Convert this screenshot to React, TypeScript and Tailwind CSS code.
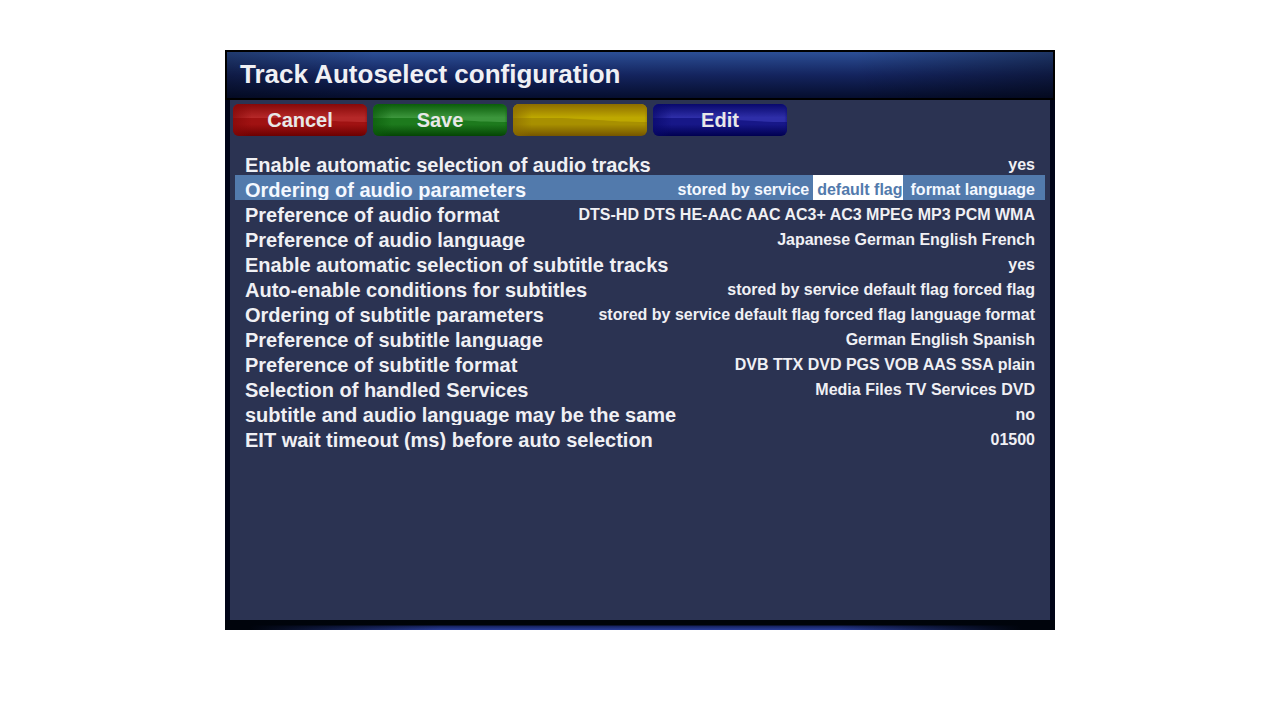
import { useId, useState } from "react";

type Setting = { label: string; values: string[] };

const settings: Setting[] = [
  { label: "Enable automatic selection of audio tracks", values: ["yes"] },
  { label: "Ordering of audio parameters", values: ["stored by service", "default flag", "format", "language"] },
  {
    label: "Preference of audio format",
    values: ["DTS-HD", "DTS", "HE-AAC", "AAC", "AC3+", "AC3", "MPEG", "MP3", "PCM", "WMA"],
  },
  { label: "Preference of audio language", values: ["Japanese", "German", "English", "French"] },
  { label: "Enable automatic selection of subtitle tracks", values: ["yes"] },
  { label: "Auto-enable conditions for subtitles", values: ["stored by service", "default flag", "forced flag"] },
  {
    label: "Ordering of subtitle parameters",
    values: ["stored by service", "default flag", "forced flag", "language", "format"],
  },
  { label: "Preference of subtitle language", values: ["German", "English", "Spanish"] },
  { label: "Preference of subtitle format", values: ["DVB", "TTX", "DVD", "PGS", "VOB", "AAS", "SSA", "plain"] },
  { label: "Selection of handled Services", values: ["Media Files", "TV Services", "DVD"] },
  { label: "subtitle and audio language may be the same", values: ["no"] },
  { label: "EIT wait timeout (ms) before auto selection", values: ["01500"] },
];

type Key = { name: string; text: string; top: string; shine: string; body: string; bottom: string };

const keys: Key[] = [
  { name: "Cancel", text: "Cancel", top: "#850808", shine: "#b52828", body: "#a01212", bottom: "#6c0000" },
  { name: "Save", text: "Save", top: "#0b5c0b", shine: "#3c963c", body: "#1d7a1d", bottom: "#054505" },
  { name: "Yellow key", text: "", top: "#8c6c00", shine: "#bea800", body: "#a89000", bottom: "#755500" },
  { name: "Edit", text: "Edit", top: "#08086c", shine: "#2e2ea8", body: "#171788", bottom: "#000050" },
];

function ColorKey({ name, text, top, shine, body, bottom }: Key) {
  const id = useId();
  return (
    <button type="button" aria-label={name} className="relative h-8 w-[134px] overflow-hidden rounded-md text-xl font-bold leading-8 text-[#e8e8e8]">
      <svg className="absolute inset-0 size-full" viewBox="0 0 134 32" preserveAspectRatio="none" aria-hidden="true">
        <defs>
          <linearGradient id={`${id}u`} gradientUnits="userSpaceOnUse" x1="0" y1="0" x2="0" y2="18">
            <stop offset="0" stopColor={top} />
            <stop offset="0.75" stopColor={shine} />
            <stop offset="1" stopColor={shine} />
          </linearGradient>
          <linearGradient id={`${id}l`} gradientUnits="userSpaceOnUse" x1="0" y1="14" x2="0" y2="32">
            <stop offset="0" stopColor={body} />
            <stop offset="0.35" stopColor={body} />
            <stop offset="1" stopColor={bottom} />
          </linearGradient>
          <linearGradient id={`${id}s`} x1="0" y1="0" x2="1" y2="0">
            <stop offset="0" stopColor={top} stopOpacity="0.7" />
            <stop offset="0.14" stopColor={top} stopOpacity="0" />
            <stop offset="0.98" stopColor={top} stopOpacity="0" />
            <stop offset="1" stopColor={top} stopOpacity="0.4" />
          </linearGradient>
        </defs>
        <rect width="134" height="32" fill={`url(#${id}l)`} />
        <path d="M0 0H134V18C95 18 75 14 35 14H0Z" fill={`url(#${id}u)`} />
        <rect width="134" height="32" fill={`url(#${id}s)`} />
      </svg>
      <span className="relative">{text}</span>
    </button>
  );
}

export default function App() {
  const [active, setActive] = useState(1);

  return (
    <main className="px-4 py-[50px] font-['Liberation_Sans',Arial,sans-serif] text-[#f0f0f4]">
      <section className="mx-auto max-w-[830px] bg-[#000418]">
        <header className="border-2 border-black bg-linear-to-b from-[#2c4f96] via-[#14245e] to-[#060e2e]">
          <div className="bg-[linear-gradient(90deg,#0004,transparent_18%,transparent_76%,#0005)] px-[13px] pb-0.5">
            <h1 className="text-[26px] font-bold leading-11">Track Autoselect configuration</h1>
          </div>
        </header>

        <div className="mx-[5px] min-h-[520px] bg-[#2b3352]">
          <nav aria-label="Color keys" className="flex flex-wrap gap-1.5 px-[3px] pt-1">
            {keys.map((key) => (
              <ColorKey key={key.name} {...key} />
            ))}
          </nav>

          <table className="mt-3.5 block px-[5px]">
            <tbody className="block">
              {settings.map((setting, row) => (
                <tr
                  key={setting.label}
                  onClick={() => setActive(row)}
                  className={`flex h-[25px] justify-between overflow-hidden px-2.5 leading-[30px] font-bold whitespace-nowrap ${row === active ? "bg-[#527aac] text-[#f4f8ff]" : ""}`}
                >
                  <th scope="row" className="p-0 text-left text-[20px]">
                    {setting.label}
                  </th>
                  <td className="p-0 text-right text-[16px]">
                    {row === active && setting.values.length > 1 ? (
                      <span className="flex h-[25px] justify-end gap-1">
                        <span>{setting.values[0]}</span>
                        <span className="bg-white pl-1 text-[#527aac]">{setting.values[1]}</span>
                        <span className="pl-1">{setting.values.slice(2).join(" ")}</span>
                      </span>
                    ) : (
                      setting.values.join(" ")
                    )}
                  </td>
                </tr>
              ))}
            </tbody>
          </table>
        </div>

        <footer className="h-2.5 bg-[linear-gradient(90deg,#00040c_3%,transparent_26%,transparent_74%,#00040c_96%),linear-gradient(180deg,#000408_50%,#16225e_60%,#2a3f9c)]" />
      </section>
    </main>
  );
}
